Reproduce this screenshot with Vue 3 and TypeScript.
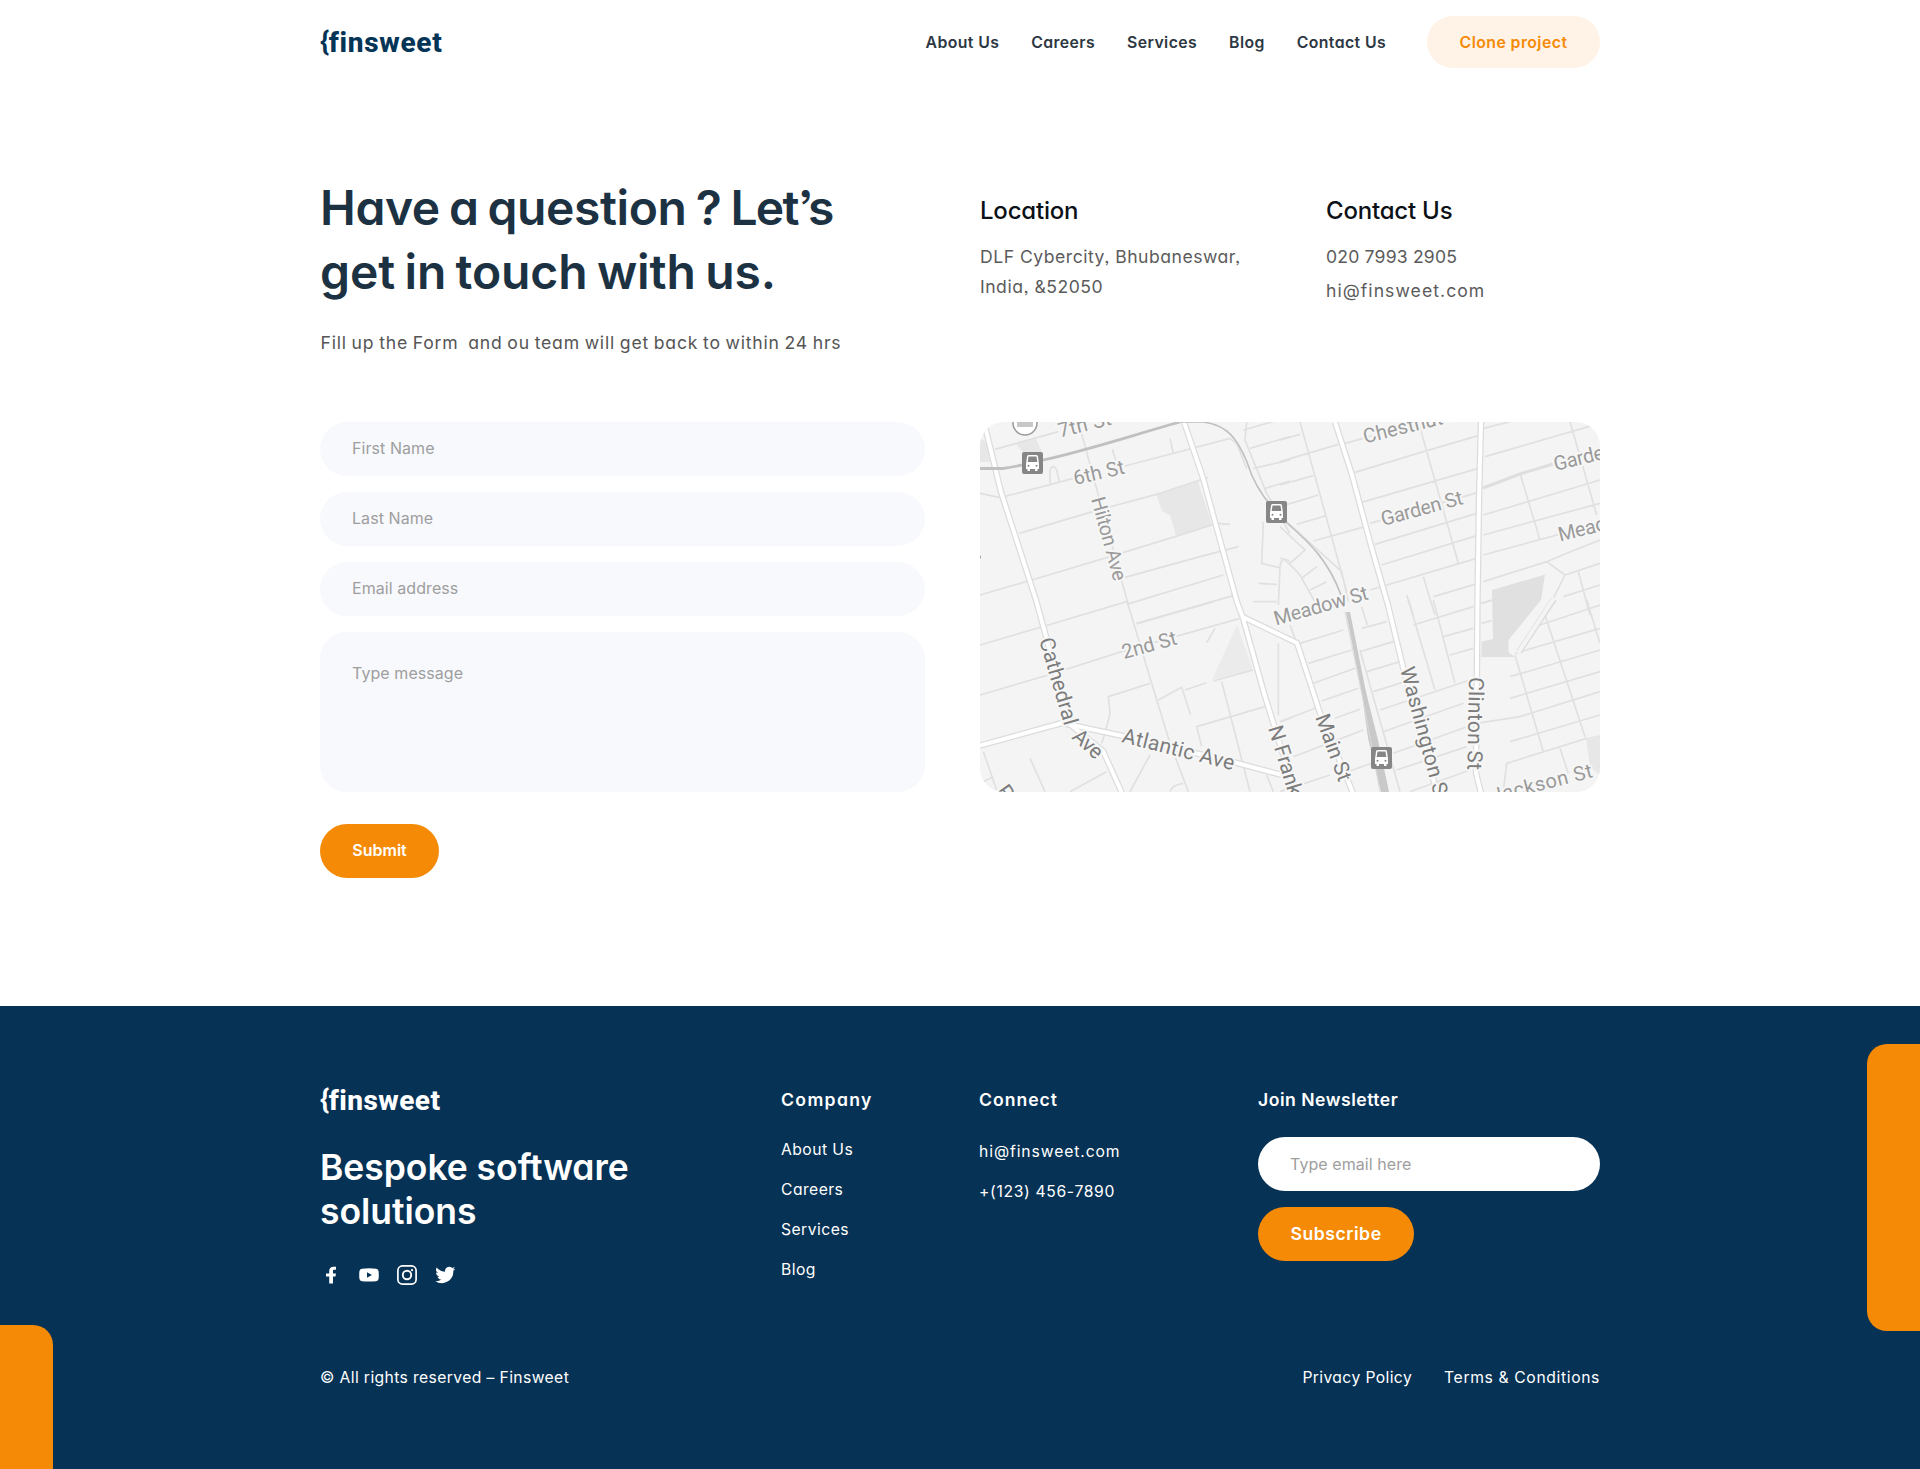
<script setup lang="ts">
import { ref } from 'vue'

interface MapTile {
  x: number
  y: number
  streets: string
}

interface MapLabel {
  text: string
  x: number
  y: number
  angle: number
  length?: number
  strong?: boolean
}

const navLinks: string[] = ['About Us', 'Careers', 'Services', 'Blog', 'Contact Us']
const companyLinks: string[] = ['About Us', 'Careers', 'Services', 'Blog']

const firstName = ref('')
const lastName = ref('')
const email = ref('')
const message = ref('')
const newsletter = ref('')

// Street geometry is stored in four tiles, each drawn at three units per pixel.
const tiles: MapTile[] = [
  {
    x: 970,
    y: 415,
    streets:
      'M75 103L265 50M325 20L475 570M110 243L310 190M465 153L780 70L800 85L830 160M30 235L90 248L110 243M240 205V165Q250 145 260 165L268 200M427 103L437 135M600 70L610 115M148 355L360 292L570 235L715 187M30 540L195 492L420 425L625 362L740 325L780 328M465 487L690 425L805 395M470 568L760 480M500 625L790 542M830 20L825 75L890 235L960 355M820 45L960 5M840 100L960 65M850 160L960 135M885 220L960 198M880 320L875 445L930 458L925 570M865 505L920 508M850 560L920 560M930 455Q935 420 960 440',
  },
  {
    x: 1280,
    y: 415,
    streets:
      'M60 20L200 530M0 75L60 58M0 140L175 88M0 210L100 182M0 275L115 240M50 328L135 303M100 378L255 335M195 85L480 5M225 172L430 110L595 62M245 262L595 160M270 325L595 232M285 388L590 295M305 450L590 362M270 525L590 430M460 545L595 505M415 20L535 445M430 485L465 600M380 540L400 600M610 40L690 20M615 125L960 25M610 300L960 195M610 360L960 265M610 420L960 325M610 500L800 440L860 415L960 375M720 175L780 375M870 20L950 300M800 440L855 480L960 445M855 480L820 550M895 470L930 600M850 545L960 510M605 565L635 555M0 335L75 405L30 445M20 320L185 470L205 560M0 430Q10 425 60 480L110 570M65 490L110 455M90 525L140 500',
  },
  {
    x: 970,
    y: 600,
    streets:
      'M30 135L235 75L470 5M470 0L545 250L600 430L655 575M500 72L730 5M30 285L225 228L455 155L810 55M735 85L710 128M645 270L710 248M730 243L850 210M565 300L635 262L662 345M540 250L415 290L420 340L405 400L395 430M695 440L680 380L885 320M755 245L840 575M925 130V345M930 365L960 355M480 575L540 465M600 575Q605 555 640 550M300 575L410 515M180 475L225 575M40 455L80 570M40 545L70 530M890 525L910 575',
  },
  {
    x: 1280,
    y: 600,
    streets:
      'M30 75L50 130M60 130L190 90M245 85L320 65M85 190L215 150M240 155L340 125M100 250L225 205M260 215L360 185M125 303L235 265M280 275L375 245M0 365L105 325M165 355L240 328M300 330L570 240M40 470L250 390M310 395L550 310M190 520L275 490M0 575L150 525M340 460L590 370L720 350L960 275M350 510L560 440M390 575L570 510M245 20L262 75M385 0L465 270M460 0L525 250M400 75L580 20M490 110L580 85M510 165L580 145M605 10L640 0M605 70L635 62M240 150L360 575M705 165L790 455M790 30L915 410M920 0L960 130M690 230L960 150M690 295L960 215M690 425L960 345M705 160L960 85M780 75L960 15M670 575L680 490L920 415M840 445L865 520',
  },
]

const roads: string[] = [
  'M984 422L1001 492L1036 600L1047 640L1067 722L1103 751L1122 793',
  'M980 745.5L1062 723L1123 736L1237 763L1282 775',
  'M1184 422L1203 478L1237 602L1243 618L1264 693L1295 793',
  'M1243 617L1297 643L1320 713L1353 793',
  'M1335 422L1352 475L1370 542L1388 605L1403 667L1437 793',
  'M1481 422L1479 500L1477.5 600L1476 773L1481 793',
  'M1595 792L1602 779',
]

const labels: MapLabel[] = [
  { text: '7th St', x: 1060, y: 437.5, angle: -14, length: 54 },
  { text: '6th St', x: 1075, y: 485, angle: -13, length: 52 },
  { text: 'Hilton Ave', x: 1091, y: 499, angle: 74.6, length: 86 },
  { text: 'Chestnut St', x: 1365, y: 443.5, angle: -14, length: 105 },
  { text: 'Garden St', x: 1383, y: 526, angle: -15.3, length: 84 },
  { text: 'Garden St', x: 1555.5, y: 471, angle: -14, length: 84 },
  { text: 'Meadow St', x: 1560, y: 541.5, angle: -14, length: 97 },
  { text: 'Meadow St', x: 1276, y: 625.5, angle: -15.8, length: 97 },
  { text: '2nd St', x: 1124, y: 659, angle: -15.5, length: 56 },
  { text: 'Cathedral', x: 1039, y: 640, angle: 73.5, length: 90, strong: true },
  { text: 'Ave', x: 1071, y: 738, angle: 42, length: 33, strong: true },
  { text: 'Atlantic Ave', x: 1121, y: 742, angle: 14.2, length: 115, strong: true },
  { text: 'N Franklin St', x: 1268, y: 728, angle: 73, strong: true },
  { text: 'Main St', x: 1315, y: 717, angle: 70, length: 70, strong: true },
  { text: 'Washington St', x: 1400, y: 669, angle: 75, length: 139, strong: true },
  { text: 'Clinton St', x: 1469, y: 677, angle: 91, length: 93, strong: true },
  { text: 'Jackson St', x: 1493, y: 803, angle: -14.5, length: 104 },
  { text: 'P', x: 996, y: 791, angle: 55, strong: true },
]

const stations: { x: number; y: number }[] = [
  { x: 1022, y: 452 },
  { x: 1266, y: 501 },
  { x: 1371, y: 747 },
]
</script>

<template>
  <div class="page">
    <header class="header wrap">
      <a class="logo"><span class="brace">{</span>finsweet</a>
      <nav class="nav">
        <a v-for="link in navLinks" :key="link">{{ link }}</a>
      </nav>
      <a class="clone">Clone project</a>
    </header>

    <main class="main wrap">
      <section class="intro">
        <h1>
          Have a question ? <span class="tight">Let’s</span><br /><span class="second"
            >get in touch with us.</span
          >
        </h1>
        <p>Fill up the Form&nbsp; and ou team will get back to within 24 hrs</p>
      </section>

      <section class="info">
        <div class="info-col">
          <h2>Location</h2>
          <p class="address">DLF Cybercity, Bhubaneswar,<br />India, &amp;52050</p>
        </div>
        <div class="info-col contact">
          <h2>Contact Us</h2>
          <p class="tel">020 7993 2905</p>
          <p class="mail">hi@finsweet.com</p>
        </div>
      </section>

      <form class="form" @submit.prevent>
        <input v-model="firstName" type="text" placeholder="First Name" />
        <input v-model="lastName" type="text" placeholder="Last Name" />
        <input v-model="email" type="text" placeholder="Email address" />
        <textarea v-model="message" placeholder="Type message"></textarea>
        <button type="submit">Submit</button>
      </form>

      <svg class="map" viewBox="980 422 620 370" width="620" height="370">
        <rect x="980" y="422" width="620" height="370" fill="#f4f4f4" />

        <g fill="#e7e7e7">
          <path d="M1156.500 495L1198 481.500L1212 525L1176 535.500L1170 515L1162 511Z" />
          <path d="M1015 443L1036 439L1042 452L1025 455Z" />
          <path d="M980 438L987 442L990 462H980Z" />
          <path d="M1237 625L1253 670L1212 680Z" fill="#ebebeb" />
          <path d="M1586 738L1600 735V775L1590 767Z" />
        </g>
        <path
          d="M1492 590L1545 574.500L1541 600L1508.500 640V652.500L1515 657H1481.500V641.500L1493 639Z"
          fill="#e0e0e0"
        />

        <g
          v-for="tile in tiles"
          :key="`${tile.x}-${tile.y}`"
          :transform="`translate(${tile.x} ${tile.y}) scale(0.33333)`"
        >
          <path :d="tile.streets" fill="none" stroke="#e0e0e0" stroke-width="5" />
        </g>

        <path d="M1483 488L1520 474L1553 464" fill="none" stroke="#dedede" stroke-width="3" />
        <path d="M1554 599L1519 652" fill="none" stroke="#dcdcdc" stroke-width="6" />
        <path d="M1554 598L1518 653" fill="none" stroke="#f4f4f4" stroke-width="4" />

        <g fill="none" stroke="#dcdcdc" stroke-width="6.500" stroke-linejoin="round">
          <path v-for="road in roads" :key="road" :d="road" />
        </g>
        <g fill="none" stroke="#ffffff" stroke-width="4" stroke-linejoin="round">
          <path v-for="road in roads" :key="road" :d="road" />
        </g>

        <g fill="none" stroke="#c0c0c0">
          <path
            d="M980 468.500H1003Q1025 465 1043 460C1085 451 1130 436 1180 422"
            stroke-width="2.800"
          />
          <path
            d="M1180 422H1203C1227 425 1237 438 1247 462C1253 482 1263 498 1277 512L1287 523C1310 543 1328 560 1341 595"
            stroke-width="1.600"
          />
        </g>
        <path
          d="M1346 612L1350 612L1366 692L1378 740L1389 792H1381L1368 738L1362 694Z"
          fill="#c9c9c9"
        />
        <path d="M1345 612L1363 700L1380 792" fill="none" stroke="#dadada" stroke-width="1" />

        <g class="labels">
          <text
            v-for="label in labels"
            :key="`${label.text}-${label.x}`"
            :class="{ strong: label.strong }"
            :transform="`translate(${label.x} ${label.y}) rotate(${label.angle})`"
            :textLength="label.length"
          >
            {{ label.text }}
          </text>
        </g>

        <circle cx="1025" cy="423" r="12" fill="#ffffff" stroke="#9b9b9b" stroke-width="1.500" />
        <rect x="1017" y="420" width="16" height="7" fill="#c8c8c8" />
        <circle cx="979" cy="557" r="2" fill="#a0a0a0" />

        <g v-for="s in stations" :key="s.x" :transform="`translate(${s.x} ${s.y})`">
          <rect width="21" height="22" rx="2" fill="#868686" />
          <path
            d="M5 4.500Q5 3 6.500 3H14.500Q16 3 16 4.500L17 12V17H15.500V19H13V17H8V19H5.500V17H4V12Z"
            fill="#ffffff"
          />
          <path d="M6.500 4.500H14.500L15.300 10H5.700Z" fill="#868686" />
          <circle cx="6.500" cy="13.800" r="1" fill="#868686" />
          <circle cx="14.500" cy="13.800" r="1" fill="#868686" />
        </g>
      </svg>
    </main>

    <footer class="footer">
      <span class="accent accent-right"></span>
      <span class="accent accent-left"></span>

      <div class="footer-top wrap">
        <div class="brand">
          <a class="logo"><span class="brace">{</span>finsweet</a>
          <p class="tagline">Bespoke software<br />solutions</p>
          <div class="social">
            <svg viewBox="0 0 24 24" width="24" height="24">
              <path
                d="M10.200 20.500V13.400H7V10.400H10.200V8.200C10.200 5.300 11.800 3.700 14.400 3.700H17V6.800H15.300C14.300 6.800 14 7.300 14 8.200V10.400H16.900L16.500 13.400H14V20.500Z"
                fill="#fff"
              />
            </svg>
            <svg viewBox="0 0 24 24" width="24" height="24">
              <path
                d="M5 5.700Q12 5 19 5.700Q21.300 6 21.600 8.200Q22 12 21.600 15.800Q21.300 18 19 18.200Q12 18.900 5 18.200Q2.700 18 2.400 15.800Q2 12 2.400 8.200Q2.700 6 5 5.700ZM10 9.200V14.800L14.900 12Z"
                fill="#fff"
                fill-rule="evenodd"
              />
            </svg>
            <svg viewBox="0 0 24 24" width="24" height="24" fill="none" stroke="#fff">
              <rect x="2.900" y="2.900" width="18.200" height="18.200" rx="4.600" stroke-width="1.700" />
              <circle cx="12" cy="12" r="4.200" stroke-width="1.900" />
              <circle cx="17" cy="7.100" r="1.150" fill="#fff" stroke="none" />
            </svg>
            <svg viewBox="0 0 24 24" width="24" height="24">
              <path
                d="M22.200 5.700c-.7.300-1.500.5-2.300.6.800-.5 1.500-1.300 1.800-2.200-.8.500-1.700.8-2.600 1a4.100 4.100 0 0 0-7 3.700A11.700 11.700 0 0 1 3.700 4.500a4.100 4.100 0 0 0 1.300 5.500c-.7 0-1.300-.2-1.900-.5v.1c0 2 1.400 3.700 3.300 4-.6.200-1.200.2-1.900.1.500 1.600 2 2.800 3.900 2.900A8.300 8.300 0 0 1 2.300 18.300 11.700 11.700 0 0 0 20.300 7.800c.8-.6 1.400-1.300 1.900-2.100z"
                fill="#fff"
              />
            </svg>
          </div>
        </div>

        <div class="col company">
          <h3>Company</h3>
          <a v-for="link in companyLinks" :key="link">{{ link }}</a>
        </div>

        <div class="col connect">
          <h3>Connect</h3>
          <a class="connect-mail">hi@finsweet.com</a>
          <a class="connect-tel">+(123) 456-7890</a>
        </div>

        <div class="col newsletter">
          <h3>Join Newsletter</h3>
          <input v-model="newsletter" type="text" placeholder="Type email here" />
          <button type="button">Subscribe</button>
        </div>
      </div>

      <div class="footer-bottom wrap">
        <span>© All rights reserved – Finsweet</span>
        <div class="legal">
          <a>Privacy Policy</a>
          <a class="terms">Terms &amp; Conditions</a>
        </div>
      </div>
    </footer>
  </div>
</template>

<style>
html,
body {
  margin: 0;
  background: #ffffff;
}
</style>

<style scoped>
.page {
  height: 1469px;
  display: flex;
  flex-direction: column;
  overflow: hidden;
  font-family: Inter, 'Open Sans', sans-serif;
  font-feature-settings: 'cv11', 'ss03';
}

.wrap {
  width: 1280px;
  margin: 0 auto;
}

h1,
h2,
h3,
p {
  margin: 0;
}

a {
  white-space: nowrap;
}

/* Header */
.header {
  height: 84px;
  display: flex;
  align-items: center;
}

.logo {
  display: flex;
  font-family: Roboto, sans-serif;
  font-weight: 800;
  font-size: 28px;
  line-height: 32px;
  letter-spacing: 0.7px;
  color: #043557;
}

.header .logo {
  padding-top: 1px;
}

.brace {
  margin-top: -1px;
  font-weight: 700;
  letter-spacing: -0.5px;
}

.nav {
  display: flex;
  gap: 32px;
  margin-left: auto;
  margin-right: 41px;
  padding-top: 2px;
  font-size: 15.8px;
  font-weight: 600;
  line-height: 24px;
  letter-spacing: 0.4px;
  color: #2c3742;
}

.clone {
  box-sizing: border-box;
  width: 173px;
  height: 52px;
  border-radius: 26px;
  background: #fff2e6;
  color: #f58a07;
  font-size: 15.8px;
  font-weight: 600;
  line-height: 54px;
  letter-spacing: 0.45px;
  text-align: center;
}

/* Contact area */
.main {
  display: grid;
  grid-template-columns: 605px 620px;
  grid-template-rows: 246px auto;
  column-gap: 55px;
  padding-top: 92px;
  height: 830px;
  flex-shrink: 0;
  align-items: start;
}

.intro h1 {
  font-size: 48px;
  font-weight: 600;
  line-height: 64px;
  letter-spacing: -0.4px;
  word-spacing: -2.6px;
  color: #1c3243;
  white-space: nowrap;
}

.intro .tight {
  letter-spacing: -1.7px;
}

.intro .second {
  letter-spacing: -0.1px;
}

.intro p {
  margin-top: 24px;
  padding-left: 0.5px;
  font-size: 17.6px;
  line-height: 30px;
  letter-spacing: 0.76px;
  word-spacing: -0.8px;
  color: #555555;
  white-space: nowrap;
}

.info {
  display: flex;
  padding-top: 17px;
}

.info-col {
  width: 346px;
  flex-shrink: 0;
  font-size: 17.6px;
  line-height: 30px;
  color: #5b5b5b;
}

.info-col.contact {
  width: 270px;
}

.info h2 {
  margin-bottom: 13px;
  font-size: 24px;
  font-weight: 500;
  line-height: 36px;
  letter-spacing: -0.2px;
  color: #0b1116;
}

.address {
  letter-spacing: 0.5px;
}

.tel {
  letter-spacing: 0.18px;
}

.mail {
  margin-top: 4px;
  letter-spacing: 1.05px;
}

.form {
  display: flex;
  flex-direction: column;
  gap: 16px;
}

input,
textarea {
  box-sizing: border-box;
  width: 100%;
  height: 54px;
  padding: 0 32px 2px;
  border: 0;
  outline: 0;
  border-radius: 27px;
  background: #f8f9fd;
  font-family: Inter, sans-serif;
  font-size: 16px;
  line-height: 20px;
  letter-spacing: 0.07px;
  color: #333333;
}

textarea {
  display: block;
  height: 160px;
  padding-top: 31px;
  resize: none;
}

input::placeholder,
textarea::placeholder {
  color: #9e9e9e;
  opacity: 1;
}

button {
  height: 54px;
  padding: 0 0 2px;
  border: 0;
  border-radius: 27px;
  background: #f58a07;
  color: #ffffff;
  font-family: Inter, sans-serif;
  font-weight: 600;
}

.form button {
  width: 119px;
  margin-top: 16px;
  font-size: 16px;
}

.map {
  display: block;
  border-radius: 24px;
}

.labels text {
  font-family: Roboto, sans-serif;
  font-size: 20px;
  fill: #9a9a9a;
  stroke: #f6f6f6;
  stroke-width: 4px;
  stroke-linejoin: round;
  paint-order: stroke;
}

.labels text.strong {
  font-size: 21px;
  fill: #7c7c7c;
}

/* Footer */
.footer {
  position: relative;
  flex: 1;
  background: #063255;
  color: #ffffff;
  display: flex;
  flex-direction: column;
}

.accent {
  position: absolute;
  width: 53px;
  background: #f58a07;
}

.accent-right {
  top: 38px;
  right: 0;
  height: 287px;
  border-radius: 20px 0 0 20px;
}

.accent-left {
  left: 0;
  bottom: 0;
  height: 144px;
  border-radius: 0 20px 0 0;
}

.footer-top {
  display: grid;
  grid-template-columns: 461px 198px 279px 342px;
  padding-top: 79px;
  height: 280px;
}

.brand {
  display: flex;
  flex-direction: column;
}

.brand .logo {
  letter-spacing: 0.45px;
  color: #ffffff;
}

.tagline {
  margin-top: 29px;
  font-size: 35.5px;
  font-weight: 600;
  line-height: 44px;
  letter-spacing: -0.05px;
}

.social {
  display: flex;
  gap: 14px;
  margin: 29px 0 0 -1px;
}

.col {
  display: flex;
  flex-direction: column;
  align-items: flex-start;
  font-size: 15.7px;
  line-height: 24px;
  letter-spacing: 0.45px;
  gap: 16px;
  padding-top: 1px;
}

.col h3 {
  margin-bottom: 8px;
  font-size: 17.6px;
  font-weight: 600;
  line-height: 28px;
  letter-spacing: 0.5px;
}

.company h3 {
  letter-spacing: 1.35px;
}

.connect h3 {
  margin-bottom: 10px;
  letter-spacing: 1px;
}

.connect-mail {
  letter-spacing: 0.9px;
}

.connect-tel {
  letter-spacing: 0.66px;
}

.newsletter h3 {
  margin-bottom: 7px;
}

.newsletter input {
  padding-bottom: 0;
  background: #ffffff;
  font-size: 16px;
}

.newsletter button {
  width: 156px;
  font-size: 17.6px;
  font-feature-settings: 'cv11';
  letter-spacing: 0.55px;
}

.footer-bottom {
  display: flex;
  justify-content: space-between;
  padding-top: 1px;
  font-size: 15.7px;
  line-height: 24px;
  letter-spacing: 0.38px;
}

.legal {
  display: flex;
  gap: 32px;
}

.terms {
  letter-spacing: 0.63px;
}
</style>
